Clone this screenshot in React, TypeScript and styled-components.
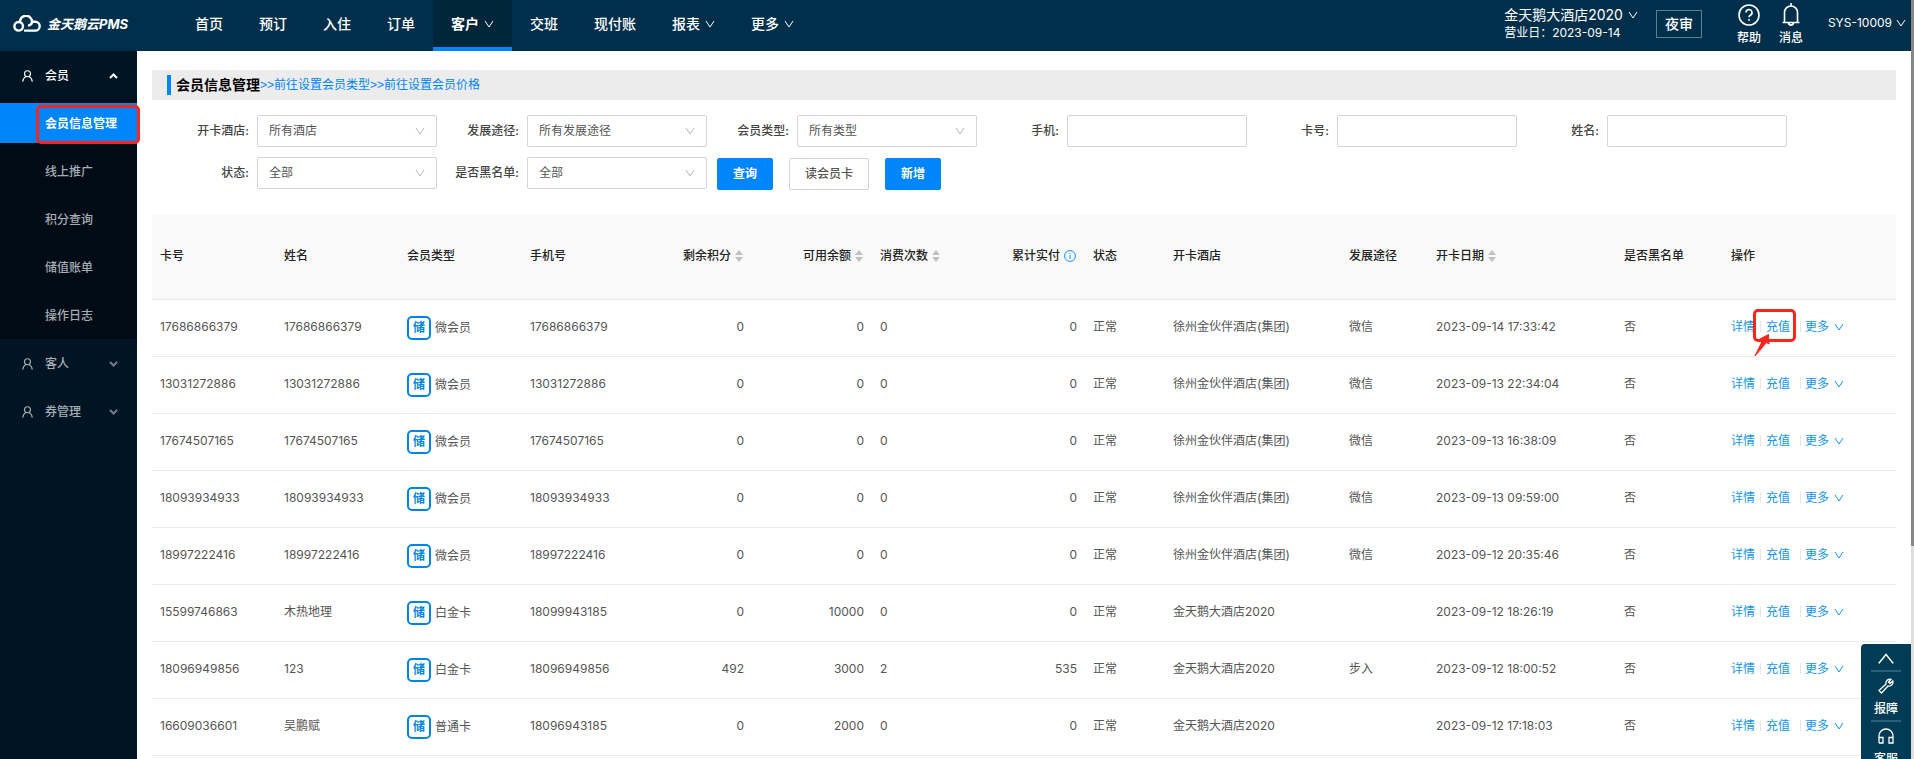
import React from 'react';
import styled, { createGlobalStyle, css } from 'styled-components';

const Global = createGlobalStyle`
  *, *::before, *::after { box-sizing: border-box; }
  body {
    margin: 0;
    background: #fff;
    color: #555;
    font: 12px/18px Inter, "Noto Sans CJK SC", sans-serif;
  }
  button, input, select { font: inherit; }
  a { color: #0085fa; text-decoration: none; }
`;

const Page = styled.div`
  display: flex;
  height: 100vh;
  overflow: hidden;
`;

const Shell = styled.div`
  flex: 1;
  min-width: 0;
  display: flex;
  flex-direction: column;
`;

const ScrollTrack = styled.div`
  width: 3px;
  background: #dedede;
`;

const ScrollThumb = styled.div`
  height: 72%;
  background: #878787;
`;

const Header = styled.header`
  display: flex;
  flex: none;
  height: 51px;
  background: #002f4c;
  color: #fff;
`;

const Brand = styled.a`
  display: flex;
  align-items: center;
  gap: 6px;
  width: 177px;
  padding: 0 0 3px 13px;
  color: #fff;
  font-size: 13px;
  font-weight: 700;
  font-style: italic;
`;

const Nav = styled.nav`
  display: flex;
  flex: 1;
`;

const NavItem = styled.a<{ $active?: boolean }>`
  display: flex;
  align-items: center;
  gap: 5px;
  padding: 0 18px 4px;
  color: #fff;
  font-size: 14px;
  font-weight: 500;
  ${(p) => p.$active && css`
    padding-bottom: 0;
    background: #00263c;
    border-bottom: 4px solid #0085fa;
    font-weight: 700;
  `}
`;

const Hotel = styled.div`
  margin: 6px 18px 0 0;
`;

const HotelName = styled.button`
  display: flex;
  align-items: center;
  gap: 5px;
  padding: 0;
  border: 0;
  background: none;
  color: inherit;
  font-size: 14px;
  line-height: 18px;
`;

const AuditButton = styled.button`
  align-self: flex-start;
  width: 46px;
  height: 28px;
  margin: 10px 26px 0 0;
  padding: 0;
  border: 1px solid #5c7f98;
  background: none;
  color: #fff;
  font-size: 14px;
  font-weight: 500;
`;

const HeaderLink = styled.a`
  display: flex;
  flex-direction: column;
  align-items: center;
  gap: 2px;
  width: 42px;
  padding-top: 3px;
  color: #fff;
  font-weight: 500;
`;

const Account = styled.button`
  display: flex;
  align-items: center;
  gap: 4px;
  padding: 0 5px 5px 16px;
  border: 0;
  background: none;
  color: #fff;
`;

const Body = styled.div`
  display: flex;
  flex: 1;
  min-height: 0;
`;

const Sidebar = styled.aside`
  flex: none;
  width: 137px;
  background: #001524;
`;

const Group = styled.button<{ $open?: boolean }>`
  display: flex;
  align-items: center;
  gap: 12px;
  width: 100%;
  height: 48px;
  padding: 1px 19px 0 22px;
  border: 0;
  background: none;
  color: ${(p) => (p.$open ? '#fff' : '#a6adb4')};
  font-weight: 500;
  text-align: left;
  span { flex: 1; }
  span + svg { opacity: ${(p) => (p.$open ? 1 : 0.7)}; }
`;

const SubMenu = styled.div`
  padding: 4px 0;
  display: grid;
  gap: 8px;
  background: #000c15;
`;

const SubItem = styled.a<{ $active?: boolean }>`
  position: relative;
  height: 40px;
  padding-left: 45px;
  line-height: 41px;
  color: ${(p) => (p.$active ? '#fff' : '#a6adb4')};
  background: ${(p) => (p.$active ? '#0085fa' : 'none')};
  font-weight: ${(p) => (p.$active ? 700 : 500)};
`;

const Mark = styled.span`
  position: absolute;
  border: 3px solid #fa261e;
  border-radius: 5px;
  pointer-events: none;
`;

const MenuMark = styled(Mark)`
  inset: 2px -3px -1px 36px;
`;

const LinkMark = styled(Mark)`
  inset: -9px -6px -6px -13px;
`;

const MarkArrow = styled.svg`
  position: absolute;
  top: 14px;
  left: -13px;
  pointer-events: none;
`;

const Main = styled.main`
  flex: 1;
  min-width: 0;
  padding: 19px 15px 0;
  overflow: hidden;
`;

const TitleBar = styled.div`
  display: flex;
  align-items: center;
  height: 30px;
  padding-left: 15px;
  background: #ececec;
  a {
    font-family: "Liberation Sans", "Noto Sans CJK SC", sans-serif;
    line-height: 20px;
  }
`;

const Title = styled.h1`
  margin: 0;
  padding-left: 5px;
  border-left: 4px solid #0085fa;
  color: #000;
  font-size: 14px;
  line-height: 20px;
`;

const Filters = styled.form`
  display: flex;
  flex-wrap: wrap;
  align-items: flex-start;
  gap: 10px 0;
  padding: 15px 15px 25px;
`;

const Field = styled.div`
  display: flex;
  align-items: center;
  width: 270px;
  label {
    width: 90px;
    padding-right: 8px;
    text-align: right;
    font-weight: 500;
    color: #444;
  }
`;

const box = css`
  width: 180px;
  height: 32px;
  padding: 0 11px;
  border: 1px solid #d4d4d4;
  border-radius: 2px;
  background: #fff;
  color: #555;
`;

const TextInput = styled.input`${box}`;

const SelectBox = styled.div`
  position: relative;
  select { ${box} appearance: none; display: block; }
  svg { position: absolute; right: 12px; top: 12px; pointer-events: none; }
`;

const Actions = styled.div`
  display: flex;
  gap: 16px;
  padding: 1px 0 0 10px;
`;

const Button = styled.button<{ $primary?: boolean }>`
  height: 32px;
  padding: 0 15px;
  border: 1px solid ${(p) => (p.$primary ? '#0085fa' : '#d4d4d4')};
  border-radius: 2px;
  background: ${(p) => (p.$primary ? '#0085fa' : '#fff')};
  color: ${(p) => (p.$primary ? '#fff' : '#555')};
  font-weight: ${(p) => (p.$primary ? 700 : 500)};
`;

const Table = styled.table`
  width: 100%;
  table-layout: fixed;
  border-collapse: collapse;
  th, td {
    padding: 0 8px 2px;
    border-bottom: 1px solid #ebebeb;
    text-align: left;
    white-space: nowrap;
  }
  th {
    height: 84px;
    background: #f9f9f9;
    color: #222;
    font-weight: 500;
  }
  td { height: 57px; }
`;

const HeadCell = styled.th<{ $end?: boolean }>`
  && { text-align: ${(p) => (p.$end ? 'right' : 'left')}; }
  svg { margin: 0 1px 0 4px; vertical-align: -2px; }
`;

const Cell = styled.td<{ $end?: boolean }>`
  && { text-align: ${(p) => (p.$end ? 'right' : 'left')}; }
`;

const MemberType = styled.span`
  display: flex;
  align-items: center;
  gap: 4px;
  padding-top: 2px;
`;

const StoredTag = styled.span`
  width: 24px;
  height: 24px;
  border: 2px solid #0085e6;
  border-radius: 5px;
  color: #0085e6;
  font-weight: 700;
  line-height: 20px;
  text-align: center;
`;

const RowActions = styled.div`
  display: flex;
  align-items: center;
  a { position: relative; color: #1495ec; }
  i { width: 1px; height: 11px; margin: 0 5px; background: #e6e6e6; }
  i + a + i { margin: 0 4px 0 10px; }
`;

const MoreLink = styled.a`
  svg { margin-left: 5px; }
`;

const Dock = styled.aside`
  position: fixed;
  right: 3px;
  top: calc(100vh - 115px);
  width: 50px;
  height: 140px;
  padding: 6px 10px;
  border-radius: 4px 0 0 4px;
  background: #003c56;
`;

const DockItem = styled.a`
  display: flex;
  flex-direction: column;
  align-items: center;
  gap: 6px;
  padding: 6px 0 2px;
  color: #fff;
  font-weight: 500;
  white-space: nowrap;
  &:first-child { padding: 3px 0 6px; }
  & + & { border-top: 2px solid #2a5f78; }
`;

const Chevron = ({ w = 10, h = 8, color = 'currentColor', up = false }: { w?: number; h?: number; color?: string; up?: boolean }) => (
  <svg width={w} height={h} viewBox="0 0 10 8" fill="none" stroke={color} strokeWidth="1" preserveAspectRatio="none">
    <path d={up ? 'M.5 7.500L5 1L9.500 7.500' : 'M1 1L5 7L9 1'} />
  </svg>
);

const Caret = ({ up = false }: { up?: boolean }) => (
  <svg width="9" height="6" viewBox="0 0 9 6" fill="none" stroke="currentColor" strokeWidth="2">
    <path d={up ? 'M1 5L4.500 1.500L8 5' : 'M1 1L4.500 4.500L8 1'} />
  </svg>
);

const Person = () => (
  <svg width="11" height="12" viewBox="0 0 11 12" fill="none" stroke="currentColor" strokeWidth="1.100">
    <circle cx="5.500" cy="3.800" r="3" />
    <path d="M.7 11.600C1 8.800 2.600 7.300 4 6.600M10.300 11.600C10 8.800 8.400 7.300 7 6.600" />
  </svg>
);

const Sorter = () => (
  <svg width="8" height="12" viewBox="0 0 8 12" fill="#bfbfbf">
    <path d="M4 0L8 5H0ZM4 12L0 7H8Z" />
  </svg>
);

const Info = () => (
  <svg width="12" height="12" viewBox="0 0 12 12" fill="none" stroke="#1890ff">
    <circle cx="6" cy="6" r="5.400" />
    <path d="M6 5V9M6 3V4.200" />
  </svg>
);

const Cloud = () => (
  <svg width="28" height="18" viewBox="0 0 28 18" fill="none" stroke="#fff" strokeWidth="2.400">
    <path d="M10 11A4.300 4.300 0 1 0 5.700 15.600C8.600 15.600 10 13.600 10 11Z" />
    <path d="M7 7A6 6 0 0 1 19 6.500C19 9 17 10.300 15 10.600" />
    <path d="M11 15.600H22.300A4.400 4.400 0 0 0 22.300 6.800H19" />
  </svg>
);

const selects = [
  { id: 'hotel', label: '开卡酒店', value: '所有酒店' },
  { id: 'source', label: '发展途径', value: '所有发展途径' },
  { id: 'type', label: '会员类型', value: '所有类型' },
];
const inputs = [
  { id: 'phone', label: '手机' },
  { id: 'card', label: '卡号' },
  { id: 'name', label: '姓名' },
];
const moreSelects = [
  { id: 'status', label: '状态', value: '全部' },
  { id: 'blacklist', label: '是否黑名单', value: '全部' },
];

const SelectField = ({ id, label, value }: { id: string; label: string; value: string }) => (
  <Field>
    <label htmlFor={id}>{label}:</label>
    <SelectBox>
      <select id={id}><option>{value}</option></select>
      <Chevron color="#b5b5b5" />
    </SelectBox>
  </Field>
);

const columns: { title: string; width: number; end?: boolean; sort?: boolean; info?: boolean }[] = [
  { title: '卡号', width: 124 },
  { title: '姓名', width: 123 },
  { title: '会员类型', width: 123 },
  { title: '手机号', width: 124 },
  { title: '剩余积分', width: 106, end: true, sort: true },
  { title: '可用余额', width: 120, end: true, sort: true },
  { title: '消费次数', width: 100, sort: true },
  { title: '累计实付', width: 113, end: true, info: true },
  { title: '状态', width: 80 },
  { title: '开卡酒店', width: 176 },
  { title: '发展途径', width: 87 },
  { title: '开卡日期', width: 188, sort: true },
  { title: '是否黑名单', width: 107 },
  { title: '操作', width: 173 },
];

const group = '徐州金伙伴酒店(集团)';
const hotel = '金天鹅大酒店2020';
const members = [
  ['17686866379', '17686866379', '微会员', '17686866379', '0', '0', '0', '0', '正常', group, '微信', '2023-09-14 17:33:42', '否'],
  ['13031272886', '13031272886', '微会员', '13031272886', '0', '0', '0', '0', '正常', group, '微信', '2023-09-13 22:34:04', '否'],
  ['17674507165', '17674507165', '微会员', '17674507165', '0', '0', '0', '0', '正常', group, '微信', '2023-09-13 16:38:09', '否'],
  ['18093934933', '18093934933', '微会员', '18093934933', '0', '0', '0', '0', '正常', group, '微信', '2023-09-13 09:59:00', '否'],
  ['18997222416', '18997222416', '微会员', '18997222416', '0', '0', '0', '0', '正常', group, '微信', '2023-09-12 20:35:46', '否'],
  ['15599746863', '木热地理', '白金卡', '18099943185', '0', '10000', '0', '0', '正常', hotel, '', '2023-09-12 18:26:19', '否'],
  ['18096949856', '123', '白金卡', '18096949856', '492', '3000', '2', '535', '正常', hotel, '步入', '2023-09-12 18:00:52', '否'],
  ['16609036601', '吴鹏赋', '普通卡', '18096943185', '0', '2000', '0', '0', '正常', hotel, '', '2023-09-12 17:18:03', '否'],
];

export default function App() {
  return (
    <Page>
      <Global />
      <Shell>
        <Header>
          <Brand href="#"><Cloud />金天鹅云PMS</Brand>
          <Nav>
            <NavItem href="#">首页</NavItem>
            <NavItem href="#">预订</NavItem>
            <NavItem href="#">入住</NavItem>
            <NavItem href="#">订单</NavItem>
            <NavItem href="#" $active>客户<Chevron /></NavItem>
            <NavItem href="#">交班</NavItem>
            <NavItem href="#">现付账</NavItem>
            <NavItem href="#">报表<Chevron /></NavItem>
            <NavItem href="#">更多<Chevron /></NavItem>
          </Nav>
          <Hotel>
            <HotelName>金天鹅大酒店2020<Chevron /></HotelName>
            营业日：2023-09-14
          </Hotel>
          <AuditButton>夜审</AuditButton>
          <HeaderLink href="#">
            <svg width="24" height="24" viewBox="0 0 24 24" fill="none" stroke="#fff" strokeWidth="1.600">
              <circle cx="12" cy="12" r="10" />
              <path d="M9 9.500A3 3 0 1 1 13.300 12.200C12.400 12.700 12 13.200 12 14.200M12 16V17.800" />
            </svg>
            帮助
          </HeaderLink>
          <HeaderLink href="#">
            <svg width="24" height="24" viewBox="0 0 24 24" fill="none" stroke="#fff" strokeWidth="1.600">
              <path d="M3.500 19.500H20.500M5.500 19.500V9.500A6.500 6.500 0 0 1 18.500 9.500V19.500M12 3V0M9.500 20C10 22.800 14 22.800 14.500 20" />
            </svg>
            消息
          </HeaderLink>
          <Account>SYS-10009<Chevron /></Account>
        </Header>
        <Body>
          <Sidebar>
            <Group $open><Person /><span>会员</span><Caret up /></Group>
            <SubMenu>
              <SubItem href="#" $active>会员信息管理<MenuMark /></SubItem>
              <SubItem href="#">线上推广</SubItem>
              <SubItem href="#">积分查询</SubItem>
              <SubItem href="#">储值账单</SubItem>
              <SubItem href="#">操作日志</SubItem>
            </SubMenu>
            <Group><Person /><span>客人</span><Caret /></Group>
            <Group><Person /><span>券管理</span><Caret /></Group>
          </Sidebar>
          <Main>
            <TitleBar>
              <Title>会员信息管理</Title>
              <a href="#">&gt;&gt;前往设置会员类型</a>
              <a href="#">&gt;&gt;前往设置会员价格</a>
            </TitleBar>
            <Filters onSubmit={(e) => e.preventDefault()}>
              {selects.map((s) => <SelectField key={s.id} {...s} />)}
              {inputs.map((f) => (
                <Field key={f.id}>
                  <label htmlFor={f.id}>{f.label}:</label>
                  <TextInput id={f.id} />
                </Field>
              ))}
              {moreSelects.map((s) => <SelectField key={s.id} {...s} />)}
              <Actions>
                <Button $primary>查询</Button>
                <Button type="button">读会员卡</Button>
                <Button type="button" $primary>新增</Button>
              </Actions>
            </Filters>
            <Table>
              <colgroup>
                {columns.map((c) => <col key={c.title} style={{ width: c.width }} />)}
              </colgroup>
              <thead>
                <tr>
                  {columns.map((c) => (
                    <HeadCell key={c.title} $end={c.end}>{c.title}{c.sort && <Sorter />}{c.info && <Info />}</HeadCell>
                  ))}
                </tr>
              </thead>
              <tbody>
                {members.map((m, row) => (
                  <tr key={m[0]}>
                    {m.map((text, i) => (
                      <Cell key={columns[i].title} $end={columns[i].end}>
                        {i === 2 ? <MemberType><StoredTag>储</StoredTag>{text}</MemberType> : text}
                      </Cell>
                    ))}
                    <Cell>
                      <RowActions>
                        <a href="#">详情</a><i />
                        <a href="#">
                          充值
                          {row === 0 && (
                            <>
                              <LinkMark />
                              <MarkArrow width="18" height="28" viewBox="0 0 18 28" fill="#fa261e" stroke="#fa261e" strokeLinejoin="round">
                                <path d="M2 24L9.500 8.500L7 7L15.500 2.500L16 12L13.500 10.500Z" />
                              </MarkArrow>
                            </>
                          )}
                        </a><i />
                        <MoreLink href="#">更多<Chevron /></MoreLink>
                      </RowActions>
                    </Cell>
                  </tr>
                ))}
              </tbody>
            </Table>
          </Main>
        </Body>
      </Shell>
      <ScrollTrack><ScrollThumb /></ScrollTrack>
      <Dock>
        <DockItem href="#" aria-label="收起"><Chevron up w={16} h={11} /></DockItem>
        <DockItem href="#">
          <svg width="16" height="16" viewBox="0 0 16 16" fill="none" stroke="#fff" strokeWidth="1.300">
            <path d="M1 12.500L8 6A4 4 0 0 1 13 1.300L10.500 4L12 5.500L14.800 3A4 4 0 0 1 10 8L3.500 15Z" />
          </svg>
          报障
        </DockItem>
        <DockItem href="#">
          <svg width="16" height="16" viewBox="0 0 16 16" fill="none" stroke="#fff" strokeWidth="1.300">
            <path d="M1 15V8A7 7 0 0 1 15 8V15H11V9.500H15M1 9.500H5V15H1" />
          </svg>
          客服
        </DockItem>
      </Dock>
    </Page>
  );
}
